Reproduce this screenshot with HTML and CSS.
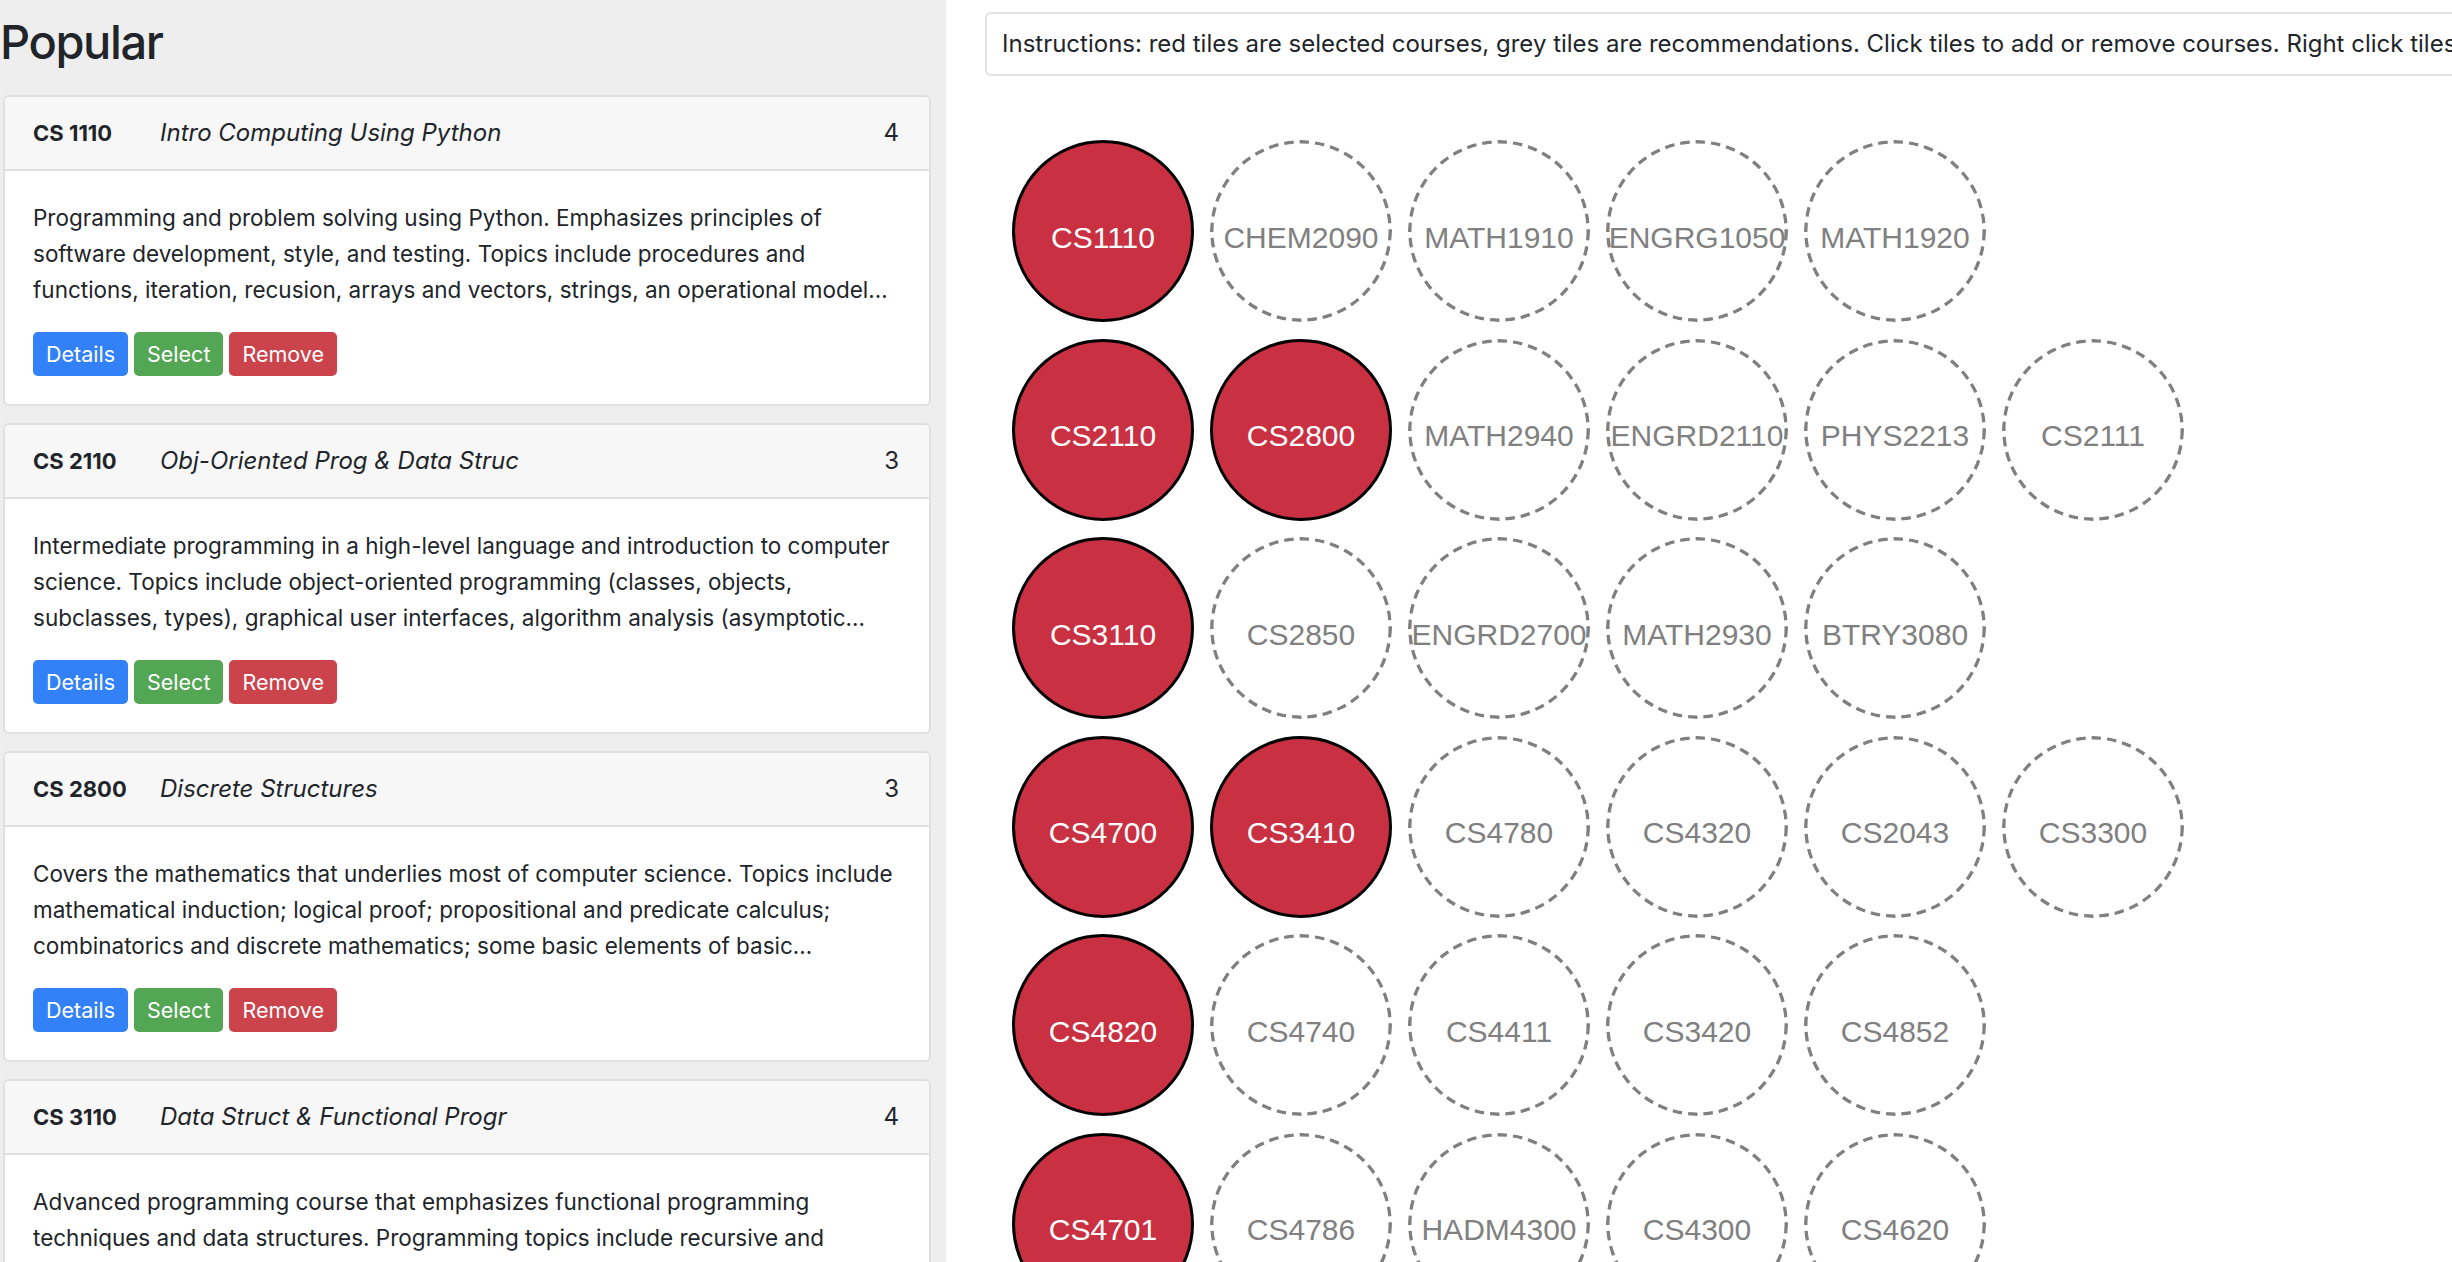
FILE: index.html
```html
<!DOCTYPE html>
<html lang="en">
<head>
<meta charset="utf-8">
<title>Course Planner</title>
<link rel="stylesheet" href="styles.css">
</head>
<body>
<div class="app">
  <aside class="sidebar">
    <h2 class="title">Popular</h2>

    <div class="card">
      <div class="card-header"><span class="code">CS 1110</span><span class="name">Intro Computing Using Python</span><span class="credits">4</span></div>
      <div class="card-body">
        <p class="desc">Programming and problem solving using Python. Emphasizes principles of software development, style, and testing. Topics include procedures and functions, iteration, recusion, arrays and vectors, strings, an operational model o…</p>
        <div class="actions"><button class="btn btn-details">Details</button><button class="btn btn-select">Select</button><button class="btn btn-remove">Remove</button></div>
      </div>
    </div>

    <div class="card">
      <div class="card-header"><span class="code">CS 2110</span><span class="name">Obj-Oriented Prog &amp; Data Struc</span><span class="credits">3</span></div>
      <div class="card-body">
        <p class="desc">Intermediate programming in a high-level language and introduction to computer science. Topics include object-oriented programming (classes, objects, subclasses, types), graphical user interfaces, algorithm analysis (asymptotic…</p>
        <div class="actions"><button class="btn btn-details">Details</button><button class="btn btn-select">Select</button><button class="btn btn-remove">Remove</button></div>
      </div>
    </div>

    <div class="card">
      <div class="card-header"><span class="code">CS 2800</span><span class="name">Discrete Structures</span><span class="credits">3</span></div>
      <div class="card-body">
        <p class="desc">Covers the mathematics that underlies most of computer science. Topics include mathematical induction; logical proof; propositional and predicate calculus; combinatorics and discrete mathematics; some basic elements of basic…</p>
        <div class="actions"><button class="btn btn-details">Details</button><button class="btn btn-select">Select</button><button class="btn btn-remove">Remove</button></div>
      </div>
    </div>

    <div class="card">
      <div class="card-header"><span class="code">CS 3110</span><span class="name">Data Struct &amp; Functional Progr</span><span class="credits">4</span></div>
      <div class="card-body">
        <p class="desc">Advanced programming course that emphasizes functional programming techniques and data structures. Programming topics include recursive and higher-order procedures…</p>
        <div class="actions"><button class="btn btn-details">Details</button><button class="btn btn-select">Select</button><button class="btn btn-remove">Remove</button></div>
      </div>
    </div>
  </aside>

  <main class="main">
    <div class="instructions">Instructions: red tiles are selected courses, grey tiles are recommendations. Click tiles to add or remove courses. Right click tiles to view course details.</div>

    <div class="tiles">
      <div class="tile-row">
        <div class="tile selected">CS1110</div>
        <div class="tile">CHEM2090</div>
        <div class="tile">MATH1910</div>
        <div class="tile">ENGRG1050</div>
        <div class="tile">MATH1920</div>
      </div>
      <div class="tile-row">
        <div class="tile selected">CS2110</div>
        <div class="tile selected">CS2800</div>
        <div class="tile">MATH2940</div>
        <div class="tile">ENGRD2110</div>
        <div class="tile">PHYS2213</div>
        <div class="tile">CS2111</div>
      </div>
      <div class="tile-row">
        <div class="tile selected">CS3110</div>
        <div class="tile">CS2850</div>
        <div class="tile">ENGRD2700</div>
        <div class="tile">MATH2930</div>
        <div class="tile">BTRY3080</div>
      </div>
      <div class="tile-row">
        <div class="tile selected">CS4700</div>
        <div class="tile selected">CS3410</div>
        <div class="tile">CS4780</div>
        <div class="tile">CS4320</div>
        <div class="tile">CS2043</div>
        <div class="tile">CS3300</div>
      </div>
      <div class="tile-row">
        <div class="tile selected">CS4820</div>
        <div class="tile">CS4740</div>
        <div class="tile">CS4411</div>
        <div class="tile">CS3420</div>
        <div class="tile">CS4852</div>
      </div>
      <div class="tile-row">
        <div class="tile selected">CS4701</div>
        <div class="tile">CS4786</div>
        <div class="tile">HADM4300</div>
        <div class="tile">CS4300</div>
        <div class="tile">CS4620</div>
      </div>
    </div>
  </main>
</div>
</body>
</html>
```

FILE: styles.css
```css
html, body {
  margin: 0;
  padding: 0;
  height: 100%;
  overflow: hidden;
}

body {
  font-family: Inter, "Liberation Sans", sans-serif;
  font-size: 22.5px;
  line-height: 36px;
  color: #212529;
  background: #fff;
}

.app {
  display: flex;
  height: 1262px;
}

/* ---------- sidebar ---------- */
.sidebar {
  flex: none;
  width: 946px;
  box-sizing: border-box;
  background: #eeeeee;
  padding: 13px 15px 0 3px;
  overflow: hidden;
}

.title {
  margin: 0 0 24px -3px;
  font-size: 47px;
  line-height: 57.6px;
  font-weight: 500;
  letter-spacing: -1.4px;
}

.card {
  background: #fff;
  border: 2px solid #e0e0e0;
  border-radius: 6px;
  margin-bottom: 17px;
  overflow: hidden;
}

.card-header {
  display: flex;
  align-items: center;
  height: 72px;
  padding: 0 30px 0 28px;
  background: #f7f7f7;
  border-bottom: 2px solid #dedede;
}

.code {
  flex: none;
  width: 127px;
  font-size: 22px;
  font-weight: 700;
}

.name {
  flex: 1;
  font-size: 24px;
  font-style: italic;
}

.credits {
  font-size: 24px;
}

.card-body {
  padding: 29px 22px 28px 28px;
}

.desc {
  margin: 0 0 24px;
  display: -webkit-box;
  -webkit-box-orient: vertical;
  -webkit-line-clamp: 3;
  overflow: hidden;
}

.actions {
  display: flex;
  gap: 6px;
}

.btn {
  height: 44px;
  padding: 0 13px;
  border: none;
  border-radius: 5px;
  font-family: inherit;
  font-size: 21.5px;
  color: #fff;
  cursor: pointer;
}

.btn-details { background: #3381f6; }
.btn-select  { background: #53a653; }
.btn-remove  { background: #cb444b; }

/* ---------- main ---------- */
.main {
  flex: 1;
  min-width: 0;
  padding: 12px 0 0 39px;
  overflow: hidden;
}

.instructions {
  width: max-content;
  padding: 12px 15px;
  border: 2px solid #e2e2e2;
  border-radius: 6px;
  font-size: 24px;
  white-space: nowrap;
}

.tiles {
  display: flex;
  flex-direction: column;
  gap: 16.5px;
  margin: 64px 0 0 27px;
}

.tile-row {
  display: flex;
  gap: 16px;
}

.tile {
  flex: none;
  width: 182px;
  height: 182px;
  box-sizing: border-box;
  padding-top: 13px;
  border-radius: 50%;
  display: flex;
  align-items: center;
  justify-content: center;
  font-family: "Liberation Sans", Arial, sans-serif;
  font-size: 30px;
  line-height: 36px;
  color: #808080;
  white-space: nowrap;
  background: url("data:image/svg+xml,%3Csvg xmlns='http://www.w3.org/2000/svg' width='182' height='182' viewBox='0 0 182 182'%3E%3Ccircle cx='91' cy='91' r='89.25' fill='none' stroke='%23808080' stroke-width='3.5' stroke-dasharray='9.5 6'/%3E%3C/svg%3E") center / 100% 100% no-repeat;
}

.tile.selected {
  background: #c93142;
  border: 3.5px solid #000;
  color: #fff;
}
```
